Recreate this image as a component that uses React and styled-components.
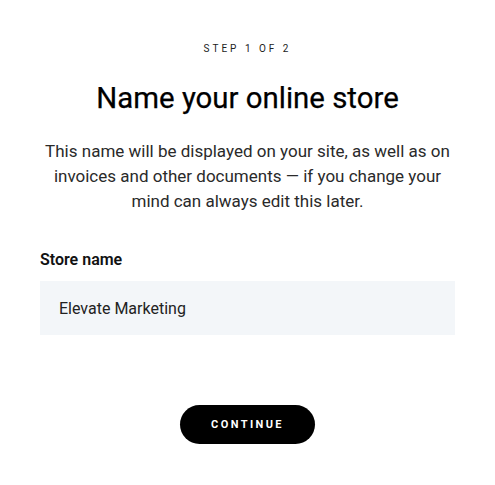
import React, { useState } from 'react'
import styled, { createGlobalStyle } from 'styled-components'

const GlobalStyle = createGlobalStyle`
  body {
    margin: 0;
    background: #fff;
    font-family: Roboto, 'Noto Sans', sans-serif;
    color: #111;
  }
`

const Page = styled.main`
  width: 495px;
  box-sizing: border-box;
  padding: 42px 40px 0;
  display: flex;
  flex-direction: column;
  align-items: center;
`

const Step = styled.div`
  font-size: 10px;
  letter-spacing: 3px;
  color: #222;
  line-height: 14px;
`

const Title = styled.h1`
  margin: 24px 0 0;
  font-size: 29.4px;
  font-weight: 400;
  line-height: 36px;
  color: #000;
  -webkit-text-stroke: 0.25px #000;
`

const Lead = styled.p`
  margin: 23px 0 0;
  font-size: 17px;
  line-height: 25px;
  text-align: center;
  color: #2a2a2a;
`

const Field = styled.label`
  align-self: stretch;
  display: flex;
  flex-direction: column;
  gap: 10px;
  margin-top: 35px;
`

const FieldLabel = styled.span`
  font-size: 16px;
  font-weight: 600;
  line-height: 22px;
  color: #111;
`

const Input = styled.input`
  height: 54px;
  box-sizing: border-box;
  border: none;
  outline: none;
  background: #f3f6f9;
  padding: 0 19px;
  font-family: inherit;
  font-size: 16px;
  color: #222;
`

const Button = styled.button`
  margin-top: 70px;
  width: 135px;
  height: 39px;
  border: none;
  border-radius: 20px;
  background: #000;
  color: #fff;
  font-family: inherit;
  font-size: 11px;
  font-weight: 700;
  letter-spacing: 2.4px;
  cursor: pointer;
`

export default function App() {
  const [name, setName] = useState('Elevate Marketing')
  return (
    <>
      <GlobalStyle />
      <Page>
        <Step>STEP 1 OF 2</Step>
        <Title>Name your online store</Title>
        <Lead>
          This name will be displayed on your site, as well as on invoices and other
          documents — if you change your mind can always edit this later.
        </Lead>
        <Field>
          <FieldLabel>Store name</FieldLabel>
          <Input value={name} onChange={e => setName(e.target.value)} />
        </Field>
        <Button>CONTINUE</Button>
      </Page>
    </>
  )
}
